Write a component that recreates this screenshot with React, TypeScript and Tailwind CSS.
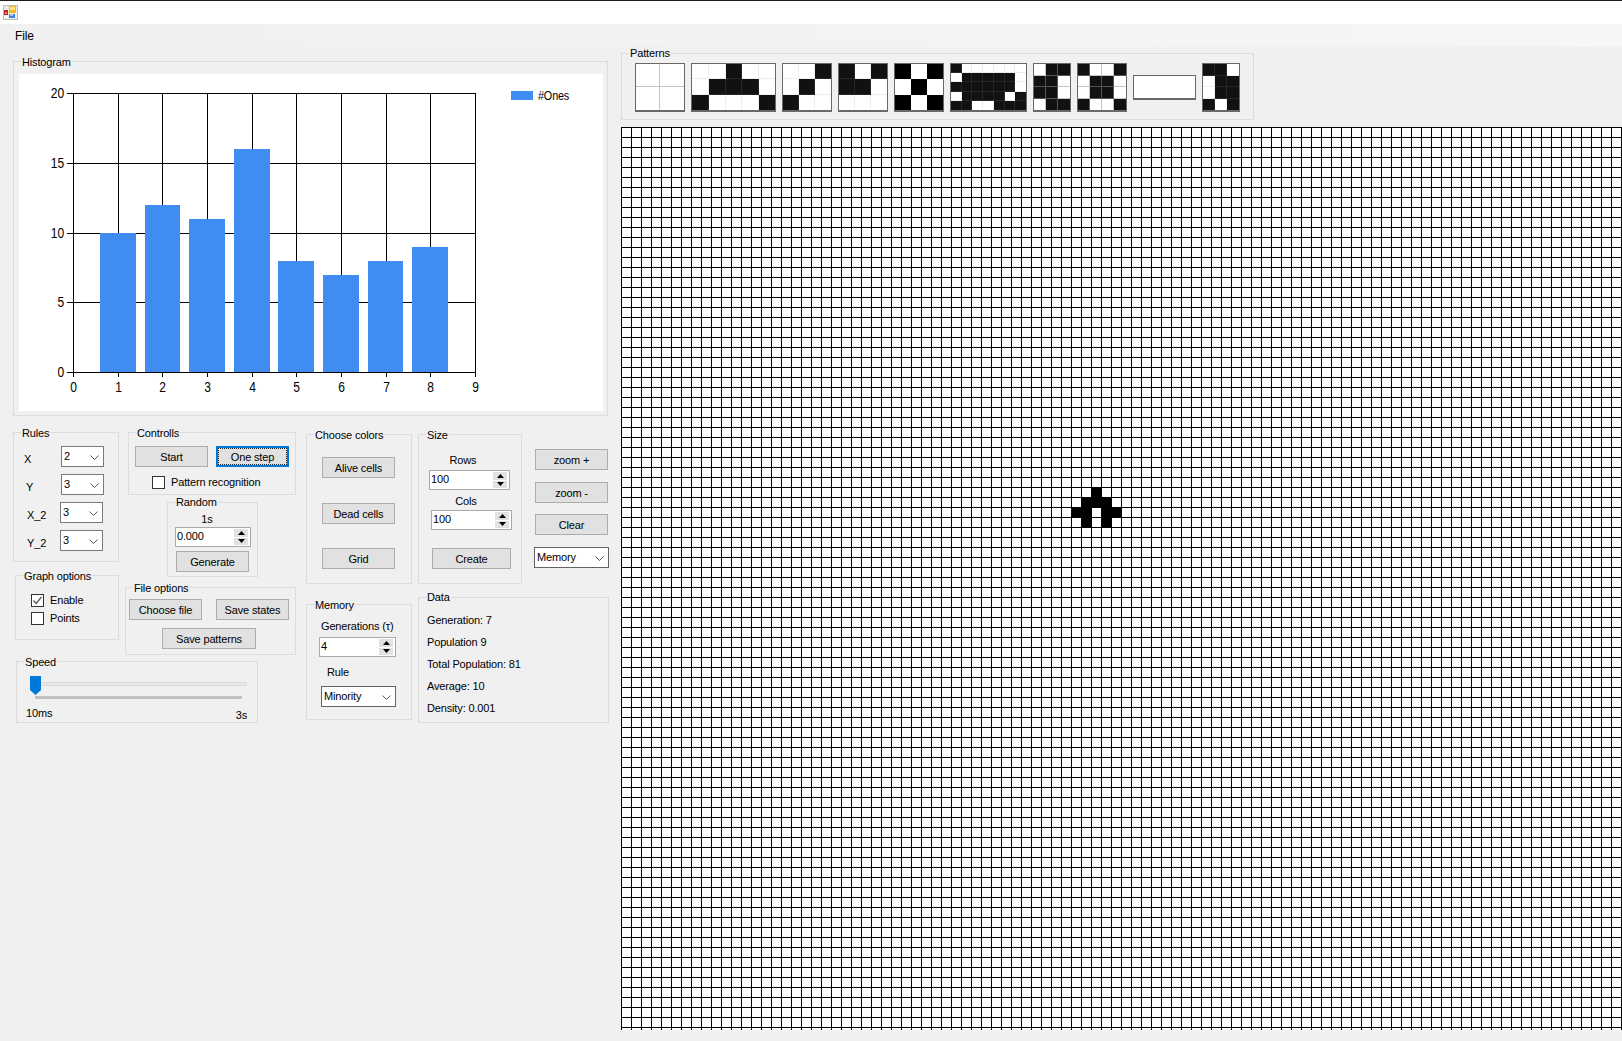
import React from "react";

const FONT = "font-['Liberation_Sans',Arial,sans-serif]";

function Group({ label, className, labelClass, children }: { label: string; className: string; labelClass?: string; children?: React.ReactNode }) {
  return (
    <div className={"relative box-border border border-[#dcdcdc] " + className}>
      <span className={"absolute left-[7px] bg-[#f0f0f0] px-[1px] text-[11px] leading-[14px] text-black " + (labelClass ?? "-top-[7px]")}>{label}</span>
      {children}
    </div>
  );
}

function Btn({ label, className }: { label: string; className: string }) {
  return (
    <div className={"box-border flex h-[21px] shrink-0 items-center justify-center border border-[#adadad] bg-[#e1e1e1] text-[11px] leading-[14px] text-black " + className}>
      {label}
    </div>
  );
}

function Combo({ value, className, dark }: { value: string; className: string; dark?: boolean }) {
  return (
    <div className={"box-border flex h-[21px] shrink-0 items-center justify-between border bg-white pl-[2px] pr-[4px] text-[11px] leading-[14px] text-black " + (dark ? "border-[#646464] " : "border-[#7a7a7a] ") + className}>
      <span className="-mt-[2px]">{value}</span>
      <svg width="9" height="5" viewBox="0 0 9 5" className="mt-[1px]">
        <path d="M0.5 0.5 L4.5 4.5 L8.5 0.5" fill="none" stroke="#555" strokeWidth="1" />
      </svg>
    </div>
  );
}

function Spin({ value, className }: { value: string; className: string }) {
  return (
    <div className={"box-border flex h-[20px] shrink-0 items-center justify-between border border-[#a9a9a9] bg-white pl-[1px] pr-[2px] text-[11px] leading-[14px] text-black " + className}>
      <span className="-mt-[2px]">{value}</span>
      <div className="flex h-[16px] w-[14px] flex-col gap-[1px]">
        <div className="flex flex-1 items-center justify-center bg-[#e1e1e1]">
          <svg width="7" height="4" viewBox="0 0 7 4"><path d="M3.5 0 L7 4 L0 4 Z" fill="#000" /></svg>
        </div>
        <div className="flex flex-1 items-center justify-center bg-[#e1e1e1]">
          <svg width="7" height="4" viewBox="0 0 7 4"><path d="M0 0 L7 0 L3.5 4 Z" fill="#000" /></svg>
        </div>
      </div>
    </div>
  );
}

function Check({ label, checked, className }: { label: string; checked?: boolean; className: string }) {
  return (
    <div className={"flex h-[13px] items-center gap-[6px] text-[11px] leading-[14px] text-black " + className}>
      <div className="box-border flex h-[13px] w-[13px] items-center justify-center border border-[#333] bg-white">
        {checked && (
          <svg width="11" height="11" viewBox="0 0 11 11">
            <path d="M1.5 5.5 L4.2 8.5 L9.5 1.8" fill="none" stroke="#555" strokeWidth="1.3" />
          </svg>
        )}
      </div>
      <span className="-mt-[2px]">{label}</span>
    </div>
  );
}

function RuleRow({ label, value, labelClass, comboClass }: { label: string; value: string; labelClass: string; comboClass: string }) {
  return (
    <div className="mb-[7px] flex h-[21px]">
      <span className={"mt-[6px] text-[11px] leading-[14px] text-black " + labelClass}>{label}</span>
      <Combo value={value} className={comboClass} />
    </div>
  );
}

function Thumb({ rows, className, pure, strong, cols }: { rows: string[]; className: string; pure?: boolean; strong?: boolean; cols?: string }) {
  const n = rows[0].length;
  return (
    <div
      className={"box-border grid shrink-0 overflow-hidden border border-b-2 border-[#696969] bg-white " + className}
      style={{ gridTemplateColumns: cols ?? `repeat(${n}, 1fr)`, gridTemplateRows: `repeat(${rows.length}, 1fr)` }}
    >
      {rows.flatMap((r, i) =>
        r.split("").map((c, j) => {
          const black = c === "1";
          const edge = (j < n - 1 ? "border-r " : "") + (i < rows.length - 1 ? "border-b " : "");
          const cls = pure
            ? black ? "bg-black" : "bg-white"
            : black
            ? "box-border bg-[#111] " + edge + (strong ? "border-[#555]" : "border-[#262626]")
            : "box-border bg-white " + edge + (strong ? "border-[#c4c4c4]" : "border-[#ededed]");
          return <div key={i + "-" + j} className={cls} />;
        })
      )}
    </div>
  );
}

const GX = [73.5, 118.5, 162.5, 207.5, 252.5, 296.5, 341.5, 386.5, 430.5, 475.5];
const GY = [93.5, 163.5, 233.5, 302.5, 372.5];
const YL = ["20", "15", "10", "5", "0"];
const BARS = [
  { x: 100, w: 36, y: 233 },
  { x: 145, w: 35, y: 205 },
  { x: 189, w: 36, y: 219 },
  { x: 234, w: 36, y: 149 },
  { x: 278, w: 36, y: 261 },
  { x: 323, w: 36, y: 275 },
  { x: 368, w: 35, y: 261 },
  { x: 412, w: 36, y: 247 },
];

function Chart() {
  return (
    <svg width="584" height="337" viewBox="19 74 584 337" className="block bg-white">
      {GX.map((x, i) => (
        <line key={i} x1={x} x2={x} y1={93} y2={377} stroke="#000" strokeWidth="1" />
      ))}
      {GY.map((y, i) => (
        <line key={i} x1={67} x2={476} y1={y} y2={y} stroke="#000" strokeWidth="1" />
      ))}
      {BARS.map((b, i) => (
        <rect key={i} x={b.x} y={b.y} width={b.w} height={372 - b.y} fill="#418cf0" />
      ))}
      <line x1={73} x2={476} y1={372.5} y2={372.5} stroke="#000" strokeWidth="1" />
      {YL.map((t, i) => (
        <text key={t} transform={`translate(64 ${GY[i] + 4.5}) scale(0.86 1)`} textAnchor="end" fontSize="14" fill="#000">{t}</text>
      ))}
      {GX.map((x, i) => (
        <text key={i} transform={`translate(${x} 392) scale(0.86 1)`} textAnchor="middle" fontSize="14" fill="#000">{i}</text>
      ))}
      <rect x={511} y={91} width={22} height={9} fill="#418cf0" />
      <text transform="translate(538 100) scale(0.9 1)" fontSize="12" fill="#000">#Ones</text>
    </svg>
  );
}

const BLOB = [[47, 36], [46, 37], [47, 37], [48, 37], [45, 38], [46, 38], [48, 38], [49, 38], [46, 39], [48, 39]];

export default function App() {
  return (
    <div className={"flex h-[1041px] w-[1622px] flex-col overflow-hidden bg-[#f0f0f0] text-[11px] tracking-[-0.15px] " + FONT}>
      <div className="flex h-[24px] shrink-0 items-start border-t border-[#1c1c1c] bg-white pl-[3px] pt-[4px]">
        <svg width="15" height="15" viewBox="0 0 15 15">
          <rect x="0.5" y="0.5" width="14" height="14" fill="#ececec" stroke="#bdbdbd" />
          <rect x="1" y="5" width="4" height="5" fill="#c0281c" />
          <rect x="2" y="7" width="2" height="2" fill="#f08070" />
          <rect x="6" y="1" width="7" height="7" fill="#f5b814" />
          <rect x="7" y="2" width="5" height="3" fill="#fde48a" />
          <rect x="6" y="9" width="6" height="4" fill="#4a7fdc" />
          <rect x="7" y="9" width="3" height="2" fill="#a8c6f4" />
          <rect x="1" y="11" width="2" height="2" fill="#fff" />
          <rect x="4" y="11" width="1" height="2" fill="#fff" />
        </svg>
      </div>
      <div className="flex h-[23px] shrink-0 items-center bg-gradient-to-r from-[#f0f0f0] to-[#f6f6f6] pl-[15px] text-[12px] text-black">File</div>
      <div className="flex min-h-0 flex-1">
        <div className="w-[621px] shrink-0 pl-[13px]">
          <Group label="Histogram" className="mt-[14px] h-[355px] w-[595px] pl-[5px] pt-[12px]">
            <Chart />
          </Group>
          <div className="mt-[16px] flex">
            <div className="w-[283px] shrink-0">
              <div className="flex h-[222px] gap-[6px]">
                <div className="w-[106px] shrink-0">
                  <Group label="Rules" className="h-[130px] w-[106px] pt-[13px]">
                    <RuleRow label="X" value="2" labelClass="ml-[10px] w-[37px]" comboClass="w-[43px]" />
                    <RuleRow label="Y" value="3" labelClass="ml-[12px] w-[35px]" comboClass="w-[43px]" />
                    <RuleRow label="X_2" value="3" labelClass="ml-[13px] w-[33px]" comboClass="w-[43px]" />
                    <RuleRow label="Y_2" value="3" labelClass="ml-[13px] w-[33px]" comboClass="w-[43px]" />
                  </Group>
                  <Group label="Graph options" className="ml-[2px] mt-[13px] h-[65px] w-[104px] pl-[15px] pt-[18px]">
                    <Check label="Enable" checked className="" />
                    <Check label="Points" className="mt-[5px]" />
                  </Group>
                </div>
                <div className="w-[171px] shrink-0">
                  <Group label="Controlls" className="ml-[3px] h-[63px] w-[168px] pt-[13px]">
                    <div className="ml-[6px] flex gap-[8px]">
                      <Btn label="Start" className="w-[73px]" />
                      <div className="box-border flex h-[21px] w-[73px] items-center justify-center border-2 border-[#0078d7] bg-[#e1e1e1] outline-1 -outline-offset-3 outline-dotted outline-[#222] text-[11px] leading-[14px] text-black">One step</div>
                    </div>
                    <Check label="Pattern recognition" className="ml-[23px] mt-[9px]" />
                  </Group>
                  <Group label="Random" labelClass="-top-[8px]" className="ml-[42px] mt-[7px] h-[75px] w-[91px] pt-[9px]">
                    <div className="w-[78px] text-center text-[11px] leading-[14px] text-black">1s</div>
                    <Spin value="0.000" className="ml-[7px] mt-[1px] w-[76px]" />
                    <Btn label="Generate" className="ml-[8px] mt-[4px] w-[73px]" />
                  </Group>
                  <Group label="File options" className="mt-[10px] h-[68px] w-[171px] pt-[11px]">
                    <div className="ml-[3px] flex gap-[14px]">
                      <Btn label="Choose file" className="w-[73px]" />
                      <Btn label="Save states" className="w-[73px]" />
                    </div>
                    <Btn label="Save patterns" className="ml-[36px] mt-[8px] w-[94px]" />
                  </Group>
                </div>
              </div>
              <Group label="Speed" className="ml-[3px] mt-[7px] h-[62px] w-[242px] pt-[20px]">
                <div className="relative ml-[19px] box-border h-[4px] w-[211px] border border-[#dadada] bg-[#e9e9e9]">
                  <svg width="11" height="19" viewBox="0 0 11 19" className="absolute -left-[7px] -top-[7px]">
                    <path d="M0 0 H11 V14 L5.5 19 L0 14 Z" fill="#0078d7" />
                  </svg>
                </div>
                <div className="ml-[18px] mt-[10px] h-[3px] w-[207px] bg-[#c0c0c0]" />
                <div className="ml-[9px] mt-[7px] flex w-[221px] items-start justify-between text-[11px] leading-[14px] text-black">
                  <span>10ms</span>
                  <span className="mt-[2px]">3s</span>
                </div>
              </Group>
            </div>
            <div className="ml-[10px] w-[106px] shrink-0 pt-[2px]">
              <Group label="Choose colors" className="h-[150px] w-[106px] pt-[22px]">
                <Btn label="Alive cells" className="ml-[15px] w-[73px]" />
                <Btn label="Dead cells" className="ml-[15px] mt-[25px] w-[73px]" />
                <Btn label="Grid" className="ml-[15px] mt-[24px] w-[73px]" />
              </Group>
              <Group label="Memory" className="mt-[20px] h-[116px] w-[106px] pt-[14px]">
                <div className="ml-[14px] text-[11px] leading-[14px] text-black">Generations (τ)</div>
                <Spin value="4" className="ml-[12px] mt-[4px] w-[77px]" />
                <div className="ml-[20px] mt-[8px] text-[11px] leading-[14px] text-black">Rule</div>
                <Combo value="Minority" className="ml-[14px] mt-[7px] w-[75px]" dark />
              </Group>
            </div>
            <div className="ml-[6px] w-[191px] shrink-0 pt-[2px]">
              <div className="flex gap-[12px]">
                <Group label="Size" className="h-[150px] w-[104px] pt-[18px]">
                  <div className="w-[88px] text-center text-[11px] leading-[14px] text-black">Rows</div>
                  <Spin value="100" className="ml-[10px] mt-[3px] w-[81px]" />
                  <div className="mt-[4px] w-[94px] text-center text-[11px] leading-[14px] text-black">Cols</div>
                  <Spin value="100" className="ml-[12px] mt-[2px] w-[81px]" />
                  <Btn label="Create" className="ml-[13px] mt-[18px] w-[79px]" />
                </Group>
                <div className="w-[75px] shrink-0 pt-[15px]">
                  <Btn label="zoom +" className="ml-[1px] w-[73px]" />
                  <Btn label="zoom -" className="ml-[1px] mt-[12px] w-[73px]" />
                  <Btn label="Clear" className="ml-[1px] mt-[11px] w-[73px]" />
                  <Combo value="Memory" className="mt-[12px] w-[75px]" dark />
                </div>
              </div>
              <Group label="Data" labelClass="-top-[8px]" className="mt-[13px] h-[126px] w-[191px] pl-[8px] pt-[15px]">
                <div className="flex flex-col gap-[8px] text-[11px] leading-[14px] text-black">
                  <span>Generation: 7</span>
                  <span>Population 9</span>
                  <span>Total Population: 81</span>
                  <span>Average: 10</span>
                  <span>Density: 0.001</span>
                </div>
              </Group>
            </div>
          </div>
        </div>
        <div className="flex min-w-0 flex-1 flex-col">
          <Group label="Patterns" labelClass="-top-[8px]" className="mt-[6px] h-[67px] w-[633px] shrink-0 pt-[9px]">
            <div className="ml-[13px] flex h-[49px] items-center gap-[6px]">
              <Thumb rows={["00", "00"]} strong className="h-[49px] w-[50px]" />
              <Thumb rows={["00100", "01110", "10001"]} cols="1.05fr 1fr 1fr 1fr 1fr" className="h-[49px] w-[85px]" />
              <Thumb rows={["001", "010", "100"]} className="h-[49px] w-[50px]" />
              <Thumb rows={["101", "110", "000"]} className="h-[49px] w-[50px]" />
              <Thumb rows={["101", "010", "101"]} pure className="h-[49px] w-[50px]" />
              <Thumb rows={["1000000", "0111110", "1111110", "0111101", "1100111"]} className="h-[49px] w-[77px]" />
              <Thumb rows={["011", "110", "110", "011"]} strong className="h-[49px] w-[38px]" />
              <Thumb rows={["1001", "0110", "0110", "1001"]} strong className="h-[49px] w-[50px]" />
              <Thumb rows={["0"]} className="h-[25px] w-[63px]" />
              <Thumb rows={["110", "011", "011", "101"]} className="h-[49px] w-[38px]" />
            </div>
          </Group>
          <div className="relative mt-[7px] h-[903px] w-full shrink-0 bg-white bg-[linear-gradient(to_right,#000_1px,transparent_1px),linear-gradient(to_bottom,#000_1px,transparent_1px)] bg-[size:10px_10px]">
            {BLOB.map(([c, r]) => (
              <div key={c + "-" + r} className="absolute h-[11px] w-[11px] bg-black" style={{ left: c * 10, top: r * 10 }} />
            ))}
          </div>
        </div>
      </div>
    </div>
  );
}
